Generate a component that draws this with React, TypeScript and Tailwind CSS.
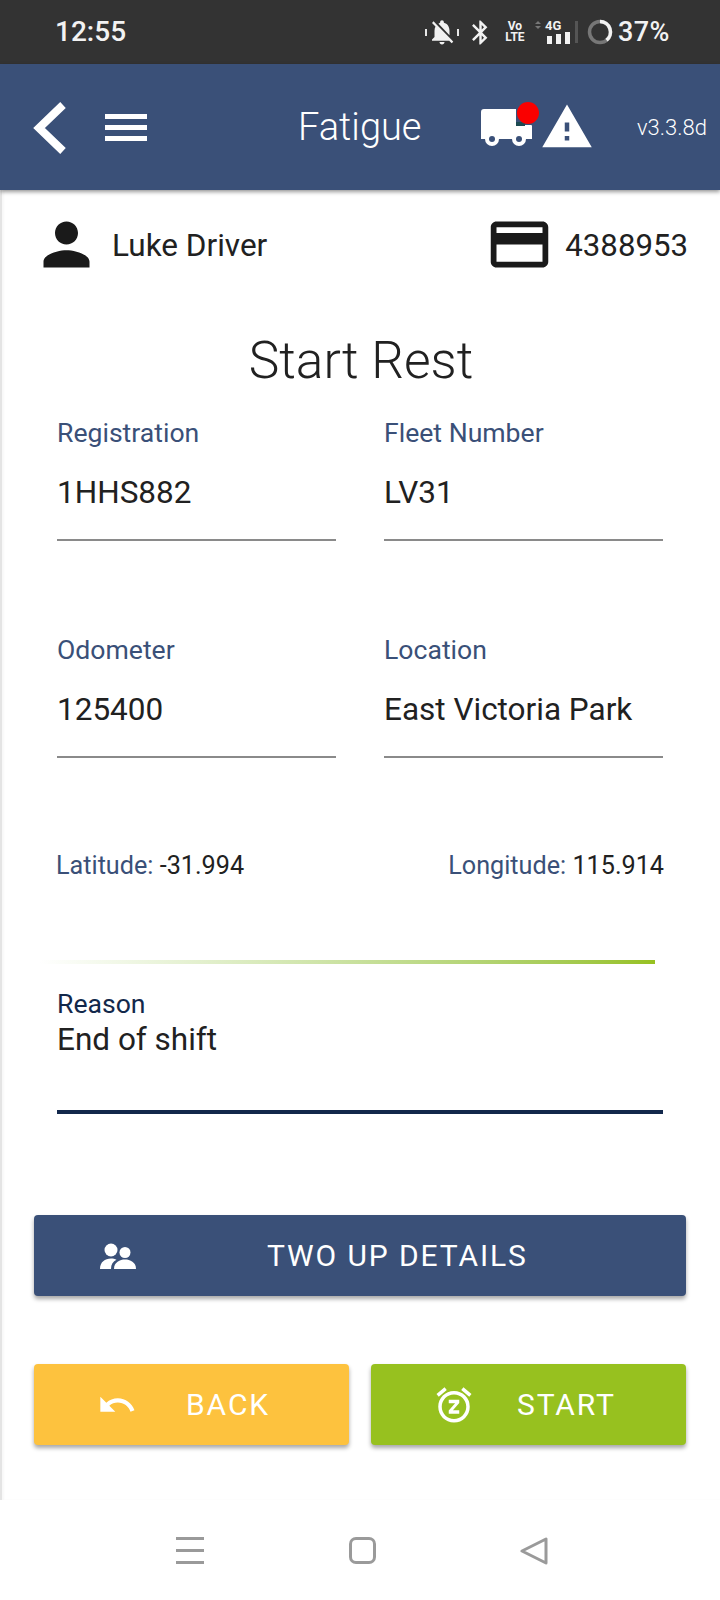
import React from "react";
import { MdPerson, MdCreditCard, MdUndo, MdSnooze, MdWarning, MdBluetooth, MdNotificationsOff } from "react-icons/md";

const fields = [
  [
    { label: "Registration", value: "1HHS882" },
    { label: "Fleet Number", value: "LV31" },
  ],
  [
    { label: "Odometer", value: "125400" },
    { label: "Location", value: "East Victoria Park" },
  ],
];

function StatusBar() {
  return (
    <div className="h-[64px] shrink-0 bg-[#333333] flex items-center text-[#f2f2f2] pl-[55px] pr-[50px] justify-between">
      <span className="text-[28px] font-medium">12:55</span>
      <div className="flex items-center">
        <div className="flex items-center w-[36px] justify-center">
          <span className="w-[2px] h-[7px] bg-[#e8e8e8] shrink-0" />
          <MdNotificationsOff className="text-[30px] shrink-0" />
          <span className="w-[2px] h-[7px] bg-[#e8e8e8] shrink-0" />
        </div>
        <MdBluetooth className="text-[29px] ml-[6px]" />
        <div className="ml-[11px] flex flex-col items-center text-[12px] leading-[11px] font-bold w-[18px]">
          <span>Vo</span>
          <span>LTE</span>
        </div>
        <div className="ml-[11px] flex flex-col items-center justify-center gap-[2px] w-[6px] mb-[14px]">
          <span className="w-0 h-0 border-x-[3px] border-x-transparent border-b-[3px] border-b-[#777777]" />
          <span className="w-0 h-0 border-x-[3px] border-x-transparent border-t-[3px] border-t-[#777777]" />
        </div>
        <div className="ml-[6px] flex flex-col w-[23px]">
          <span className="text-[13px] leading-[12px] font-bold ml-[-2px]">4G</span>
          <div className="flex items-end gap-[4px] h-[12px]">
            <span className="w-[5px] h-[8px] bg-[#f2f2f2]" />
            <span className="w-[5px] h-[10px] bg-[#f2f2f2]" />
            <span className="w-[5px] h-[12px] bg-[#f2f2f2]" />
          </div>
        </div>
        <span className="w-[3px] h-[22px] bg-[#555555] ml-[5px]" />
        <svg viewBox="0 0 26 26" className="w-[26px] h-[26px] ml-[9px]" fill="none" strokeWidth="3.5">
          <circle cx="13" cy="13" r="10.5" stroke="#777777" />
          <path d="M13 2.5A10.5 10.5 0 0 1 19.5 21.2" stroke="#f2f2f2" />
        </svg>
        <span className="text-[27px] font-medium ml-[5px] tracking-[0.5px]">37%</span>
      </div>
    </div>
  );
}

function Header() {
  return (
    <div className="h-[126px] shrink-0 bg-[#3a5078] flex items-center relative z-10 shadow-[0_2px_4px_rgba(0,0,0,0.4)] text-white">
      <svg viewBox="0 0 34 52" className="w-[34px] h-[52px] ml-[33px] mt-[1px]" fill="none" stroke="#ffffff" strokeWidth="8">
        <path d="M30 3L6 26L30 49" />
      </svg>
      <div className="ml-[38px] w-[42px] flex flex-col gap-[6px] mt-[1px]">
        <span className="h-[5px] bg-white" />
        <span className="h-[5px] bg-white" />
        <span className="h-[5px] bg-white" />
      </div>
      <span className="ml-[151px] w-[122px] text-[38px] font-light whitespace-nowrap">Fatigue</span>
      <div className="relative ml-[61px] w-[51px] h-[38px] mt-[2px]">
        <svg viewBox="0 0 51 38" className="w-[51px] h-[38px]" fill="#ffffff">
          <path d="M3 0H35V16H50a1 1 0 0 1 1 1V30H0V3a3 3 0 0 1 3-3Z" />
          <rect x="35" y="13" width="9" height="4" fill="#1c4a52" />
          <circle cx="11" cy="30" r="7" />
          <circle cx="38" cy="30" r="7" />
          <circle cx="11" cy="30" r="3" fill="#3a5078" />
          <circle cx="38" cy="30" r="3" fill="#3a5078" />
        </svg>
        <span className="absolute left-[36px] top-[-7px] w-[22px] h-[22px] rounded-full bg-[#fa0000]" />
      </div>
      <MdWarning className="text-[54px] ml-[8px] shrink-0" />
      <span className="ml-[43px] text-[22px] font-light whitespace-nowrap">v3.3.8d</span>
    </div>
  );
}

function Field({ label, value }: { label: string; value: string }) {
  return (
    <div className="w-[279px] h-[170px]">
      <div className="text-[26.6px] leading-[32px] text-[#3a5078]">{label}</div>
      <div className="h-[92px] pt-[25px] text-[31.5px] leading-[38px] text-[#212121] border-b-2 border-[#8a8a8a]">{value}</div>
    </div>
  );
}

function Button({ color, icon, label, labelClass }: { color: string; icon: React.ReactNode; label: string; labelClass: string }) {
  return (
    <div className={`flex-1 h-[81px] rounded-[4px] flex items-center text-white text-[30px] tracking-[1.9px] shadow-[0_3px_4px_rgba(0,0,0,0.35)] ${color}`}>
      {icon}
      <span className={labelClass}>{label}</span>
    </div>
  );
}

export default function App() {
  return (
    <div className="w-[720px] h-[1600px] bg-white flex flex-col font-['Roboto',sans-serif]">
      <StatusBar />
      <Header />
      <main className="flex-1 border-l-2 border-[#e4e4e4] shadow-[inset_2px_0_2px_rgba(0,0,0,0.03)]">
        <div className="h-[110px] flex items-center justify-between pl-[30px] pr-[32px] text-[31.5px] text-[#212121]">
          <div className="flex items-center">
            <MdPerson className="text-[69px] text-[#1a1a1a] mb-[2px]" />
            <span className="ml-[11px] pt-[2px]">Luke Driver</span>
          </div>
          <div className="flex items-center">
            <MdCreditCard className="text-[69px] text-[#1a1a1a] mb-[2px]" />
            <span className="ml-[11px] pt-[2px] text-[31.2px]">4388953</span>
          </div>
        </div>

        <h1 className="text-center text-[51.5px] leading-[56px] font-light text-[#212121] mt-[33px]">Start Rest</h1>

        <div className="mt-[28px] flex flex-col gap-[47px] pl-[55px]">
          {fields.map((row) => (
            <div key={row[0].label} className="flex gap-[48px]">
              {row.map((f) => (
                <Field key={f.label} {...f} />
              ))}
            </div>
          ))}
        </div>

        <div className="mt-[46px] ml-[54px] w-[608px] flex justify-between text-[25.2px] leading-[32px] text-[#212121]">
          <span><span className="text-[#3a5078]">Latitude:</span> -31.994</span>
          <span><span className="text-[#3a5078]">Longitude:</span> 115.914</span>
        </div>

        <div className="mt-[78px] ml-[38px] w-[615px] h-[4px] bg-gradient-to-r from-white to-[#97c11f]" />

        <div className="mt-[24px] ml-[55px] w-[606px] h-[126px] border-b-4 border-[#12284b]">
          <div className="text-[26.6px] leading-[32px] text-[#12284b]">Reason</div>
          <div className="text-[31.5px] leading-[38px] text-[#212121] mt-[1px]">End of shift</div>
        </div>

        <div className="mt-[101px] ml-[32px] mr-[34px] flex">
          <Button
            color="bg-[#3a5078]"
            icon={
              <svg viewBox="0 0 36 26" className="w-[36px] h-[26px] ml-[66px] shrink-0" fill="#ffffff">
                <circle cx="11" cy="7" r="6.5" />
                <circle cx="25" cy="9.5" r="5.5" />
                <path d="M14 26C14 19 20 16.5 25 16.5C30 16.5 36 19 36 26Z" />
                <path d="M0 26C0 19 5 15.5 11 15.5C13 15.5 15 16 16.5 16.8C13 18.5 11 21.5 11 26Z" />
              </svg>
            }
            label="TWO UP DETAILS"
            labelClass="ml-[131px]"
          />
        </div>

        <div className="mt-[68px] ml-[32px] mr-[34px] flex gap-[22px]">
          <Button
            color="bg-[#fdc23e]"
            icon={<MdUndo className="text-[40px] ml-[63px] shrink-0" />}
            label="BACK"
            labelClass="ml-[49px]"
          />
          <Button
            color="bg-[#97c11f]"
            icon={<MdSnooze className="text-[42px] ml-[62px] shrink-0" />}
            label="START"
            labelClass="ml-[42px]"
          />
        </div>
      </main>

      <nav className="h-[100px] shrink-0 bg-white flex items-center justify-between pl-[176px] pr-[172px] pt-[1px]">
        <div className="w-[28px] flex flex-col gap-[9px]">
          <span className="h-[3px] bg-[#9a9a9a]" />
          <span className="h-[3px] bg-[#9a9a9a]" />
          <span className="h-[3px] bg-[#9a9a9a]" />
        </div>
        <span className="w-[27px] h-[27px] rounded-[7px] border-[3px] border-[#9a9a9a]" />
        <svg viewBox="0 0 28 28" className="w-[28px] h-[28px]" fill="none" stroke="#9a9a9a" strokeWidth="3" strokeLinejoin="round">
          <path d="M26 2V26L2 14Z" />
        </svg>
      </nav>
    </div>
  );
}
